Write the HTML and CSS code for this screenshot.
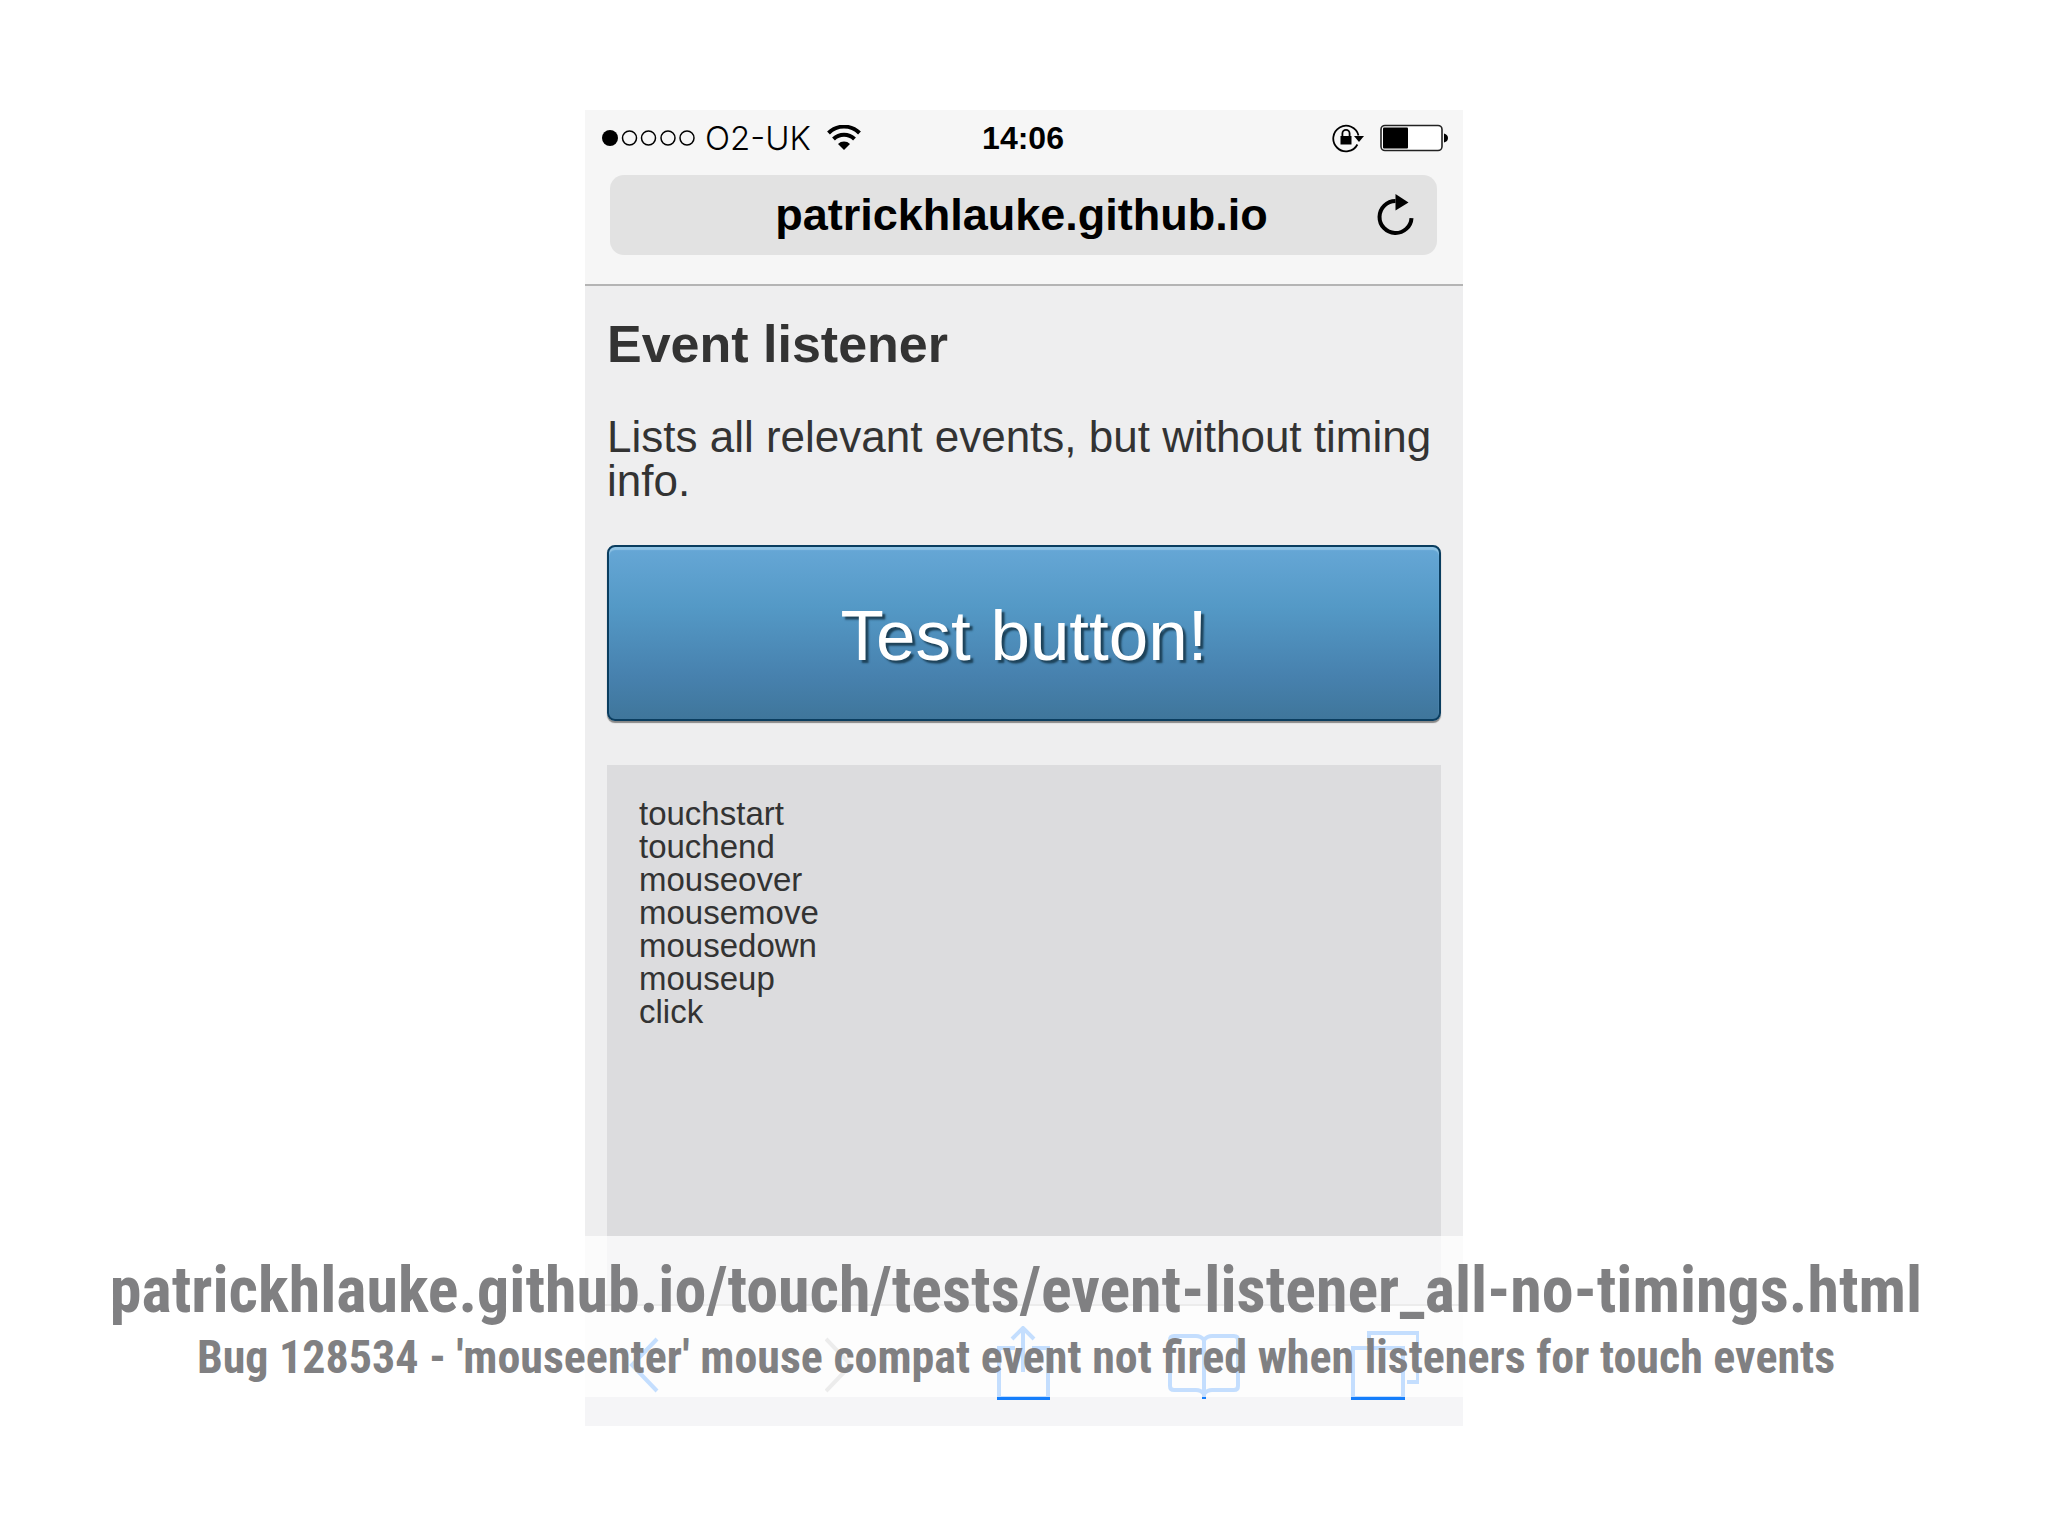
FILE: index.html
```
<!doctype html>
<html lang="en">
<head>
  <meta charset="utf-8">

  <title>Event listener - touch tests</title>
  <meta name="viewport" content="width=device-width, initial-scale=1">

  <link rel="stylesheet" href="styles.css">
</head>

<body class="slide">
  <main class="stage">
    <div class="phone">
      <header class="browser">
        <div class="status">
          <div class="status-left">
            <svg class="signal" width="94" height="16" viewBox="0 0 94 16">
              <circle cx="8" cy="8" r="8"/>
              <g fill="none" stroke="#000" stroke-width="1.5">
                <circle cx="27.5" cy="8" r="7"/>
                <circle cx="46.5" cy="8" r="7"/>
                <circle cx="66" cy="8" r="7"/>
                <circle cx="85" cy="8" r="7"/>
              </g>
            </svg>
            <span class="carrier">O2-UK</span>
            <svg class="wifi" width="34" height="26" viewBox="0 0 34 26">
              <g fill="none" stroke="#000" stroke-width="4">
                <path d="M1.500 8a22 22 0 0 1 31 0"/>
                <path d="M6.500 14a15 15 0 0 1 21 0"/>
              </g>
              <path d="M11 19a8.500 8.500 0 0 1 12 0l-6 6z"/>
            </svg>
          </div>
          <time class="clock">14:06</time>
          <div class="status-right">
            <svg width="32" height="30" viewBox="0 0 32 30">
              <path d="M25.400 21.500A12.800 12.800 0 1 1 26.500 12.500" fill="none" stroke="#000" stroke-width="1.800"/>
              <path d="M22 13h10l-5 6z"/>
              <rect x="8.500" y="13" width="11" height="8.500"/>
              <path d="M10.400 13.500V10.500a3.600 3.600 0 0 1 7.200 0v3" fill="none" stroke="#000" stroke-width="1.800"/>
            </svg>
            <svg width="68" height="28" viewBox="0 0 68 28">
              <rect x="1" y="1.500" width="61" height="25" rx="4" fill="#fff" stroke="#222" stroke-width="1.600"/>
              <rect x="3" y="3.500" width="25" height="21" rx="1"/>
              <path d="M64 9.500q4 1 4 4.500t-4 4.500z"/>
            </svg>
          </div>
        </div>
        <div class="address">
          <input class="address-input" type="text" aria-label="Address" value="patrickhlauke.github.io">
          <button class="icon-button reload" type="button" aria-label="Reload">
            <svg width="38" height="42" viewBox="0 0 38 42">
              <path d="M34.500 24a16 16 0 1 1 -16 -17" fill="none" stroke="#000" stroke-width="4"/>
              <path d="M18.500 0l13 8.500-13 8z"/>
            </svg>
          </button>
        </div>
      </header>

      <section class="page">
        <h1>Event listener</h1>
        <p>Lists all relevant events, but without timing info.</p>
        <button class="test-button" type="button">Test button!</button>
        <ul class="log">
          <li>touchstart</li>
          <li>touchend</li>
          <li>mouseover</li>
          <li>mousemove</li>
          <li>mousedown</li>
          <li>mouseup</li>
          <li>click</li>
        </ul>
      </section>

      <nav class="toolbar">
        <button class="icon-button" type="button" aria-label="Back">
          <svg width="30" height="74" viewBox="0 0 30 74">
            <path d="M28 13L3 39l25 26"/>
          </svg>
        </button>
        <button class="icon-button icon-disabled" type="button" aria-label="Forward">
          <svg width="30" height="74" viewBox="0 0 30 74">
            <path d="M1 13l25 26L1 65"/>
          </svg>
        </button>
        <button class="icon-button" type="button" aria-label="Share">
          <svg width="54" height="74" viewBox="0 0 54 74">
            <path d="M18 22H2v50h49V22H35M26 46V2M15 13L26 2l11 11"/>
          </svg>
        </button>
        <button class="icon-button" type="button" aria-label="Bookmarks">
          <svg width="72" height="74" viewBox="0 0 72 74">
            <path d="M36 73V14Q33 10 28 10H6q-4 0-4 4v46q0 4 4 4h22q5 0 8 4 3-4 8-4h22q4 0 4-4V14q0-4-4-4H44q-5 0-8 4"/>
          </svg>
        </button>
        <button class="icon-button" type="button" aria-label="Tabs">
          <svg width="68" height="74" viewBox="0 0 68 74">
            <path d="M2 22h50v50H2zM18 18V7h49v49H56"/>
          </svg>
        </button>
      </nav>
    </div>

    <div class="caption">
      <h2 class="caption-title">patrickhlauke.github.io/touch/tests/event-listener_all-no-timings.html</h2>
      <p class="caption-text">Bug 128534 - 'mouseenter' mouse compat event not fired when listeners for touch events</p>
    </div>
  </main>
</body>
</html>
```
FILE: styles.css
```
* {
  box-sizing: border-box;
}

.slide {
  margin: 0;
  padding: 110px 0;
  background: #fff;
  font-family: "Liberation Sans", Arial, sans-serif;
}

.stage {
  position: relative;
}

.phone {
  display: flex;
  flex-direction: column;
  max-width: 878px;
  margin: 0 auto;
  background: #eeeeef;
}

.browser {
  padding: 0 26px 29px 25px;
  background: #f6f6f6;
  border-bottom: 2px solid #b4b4b4;
}

.status {
  display: grid;
  grid-template-columns: 1fr auto 1fr;
  align-items: center;
  height: 65px;
  margin: 0 -12px 0 -8px;
  padding: 0 1px 9px 0;
}

.status-left,
.status-right {
  display: flex;
  align-items: center;
}

.status-right {
  justify-content: flex-end;
  gap: 16px;
}

.carrier {
  margin: 0 16px 0 9px;
  font: 300 33px "Inter", "Liberation Sans", sans-serif;
}

.clock {
  padding-right: 4px;
  font-size: 32px;
  font-weight: bold;
}

.address {
  display: flex;
  align-items: center;
  height: 80px;
  padding: 0 22px 0 56px;
  border-radius: 14px;
  background: #e2e2e2;
}

.address-input {
  flex: 1;
  min-width: 0;
  padding: 0;
  border: 0;
  background: transparent;
  color: #000;
  font: bold 45px "Liberation Sans", Arial, sans-serif;
  text-align: center;
}

.icon-button {
  padding: 0;
  border: 0;
  background: transparent;
}

.icon-button svg {
  display: block;
}

.page {
  padding: 32px 22px 0;
  color: #333;
}

.page h1 {
  margin: 0 0 45px;
  font-size: 52px;
  line-height: 52px;
}

.page p {
  margin: 0 0 42px;
  font-size: 44px;
  line-height: 44px;
}

.test-button {
  display: block;
  width: 100%;
  height: 176px;
  margin-bottom: 44px;
  padding: 4px 0 0;
  border: 2px solid #0a3d5f;
  border-radius: 8px;
  background: linear-gradient(#66a7d6, #5499c6 35%, #4781ae 75%, #3f769b);
  box-shadow: inset 0 3px 1px #8fc3e4, 0 2px 1px #888;
  color: #fff;
  font: 71px "Liberation Sans", Arial, sans-serif;
  text-shadow: 3px 3px 2px #1d4259;
}

.log {
  min-height: 539px;
  margin: 0;
  padding: 32px;
  background: #dcdcde;
  font-size: 33px;
  line-height: 33px;
  list-style: none;
}

.toolbar {
  display: grid;
  grid-template-columns: 196fr 172fr 171fr 183fr 66fr;
  justify-items: start;
  padding: 20px 44px 26px;
  border-top: 2px solid #b4b4b4;
  background: #f5f5f7;
}

.toolbar svg {
  fill: none;
  stroke: #157efb;
  stroke-width: 4;
}

.toolbar .icon-disabled svg {
  stroke: #b4b4b4;
}

/* translucent strip over the lower part of the phone */
.caption {
  position: absolute;
  left: 0;
  right: 0;
  bottom: 29px;
  padding: 18px 16px 11px 0;
  background: rgba(255, 255, 255, 0.75);
  color: #808082;
  font-family: "Roboto Condensed", Roboto, "Liberation Sans", sans-serif;
  font-weight: bold;
  text-align: center;
}

.caption-title,
.caption-text {
  margin: 0;
}

.caption-title {
  font-size: 64px;
  line-height: 74px;
}

.caption-text {
  font-size: 46px;
  line-height: 58px;
}
```
